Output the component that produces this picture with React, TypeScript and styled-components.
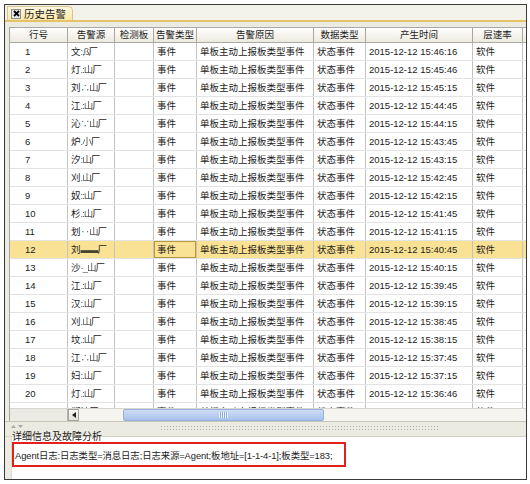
import styled, { createGlobalStyle } from 'styled-components'

interface AlarmRow {
  no: number
  src: [string, string]
  time: string
}

const columns = [58, 47, 39, 43, 117, 52, 107, 50]
const gridCols = columns.map(w => `${w}px`).join(' ')
const headers = ['行号', '告警源', '检测板', '告警类型', '告警原因', '数据类型', '产生时间', '层速率']

const times = [
  '15:46:16', '15:45:46', '15:45:15', '15:44:45', '15:44:15', '15:43:45', '15:43:15',
  '15:42:45', '15:42:15', '15:41:45', '15:41:15', '15:40:45', '15:40:15', '15:39:45',
  '15:39:15', '15:38:45', '15:38:15', '15:37:45', '15:37:15', '15:36:46', '15:36:15',
]
const sources: [string, string][] = [
  ['文', ':,ß'], ['灯', '.:山'], ['刘', '∴山'], ['江', '.:山'], ['沁', '∵山'], ['炉', '.小'],
  ['汐', ':山'], ['刈', '.山'], ['奴', '::山'], ['杉', '.:山'], ['划', '‥山'], ['刘', '▬▬'],
  ['沙', '·_山'], ['江', '.:山'], ['汉', ':.山'], ['刈', '.山'], ['坟', '.:山'], ['江', '∴山'],
  ['妇', ':.山'], ['灯', '.:山'], ['掷', '浣'],
]

const rows: AlarmRow[] = times.map((t, i) => ({ no: i + 1, src: sources[i], time: t }))

const GlobalStyle = createGlobalStyle`
  *, *::before, *::after { box-sizing: border-box; }
  body {
    margin: 0;
    background: #fff;
    font-family: "Liberation Sans", "Noto Sans CJK SC", sans-serif;
    color: #1c1c1c;
  }
`

const Frame = styled.div`
  margin: 4px;
  width: 523px;
  height: 476px;
  border: 1px solid #3a3a3a;
  display: flex;
  flex-direction: column;
  background: #ecebe2;
`

const TabBar = styled.div`
  height: 17px;
  flex: none;
  display: flex;
  align-items: flex-end;
  padding-left: 2px;
  background: #f3f2eb;
  border-bottom: 2px solid #e4c269;
`

const Tab = styled.div`
  width: 66px;
  height: 14px;
  display: flex;
  align-items: center;
  gap: 3px;
  padding-left: 3px;
  background: linear-gradient(#fef8df, #fbe8a6);
  border: 1px solid #d6c391;
  border-bottom: none;
  border-top-right-radius: 5px;
  font-size: 10.5px;
  line-height: 12px;
`

const CloseBox = styled.span`
  width: 10px;
  height: 10px;
  display: grid;
  place-items: center;
  border: 1px solid #8c8c8c;
  background: #e6e6e6;
`

const Content = styled.div`
  flex: none;
  padding: 5px 0 0 4px;
`

const Grid = styled.div`
  background: #fff;
  border-left: 1px solid #a5a5a5;
`

const HeaderRow = styled.div`
  display: grid;
  grid-template-columns: ${gridCols};
  height: 16px;
  border-top: 1px solid #a9a9a9;
  border-bottom: 1px solid #a9a9a9;
  background: linear-gradient(#fefefd, #eceadf);
`

const HeadCell = styled.div`
  border-right: 1px solid #aca899;
  text-align: center;
  font-size: 9.5px;
  line-height: 14px;
  white-space: nowrap;
  overflow: hidden;
`

const Body = styled.div`
  height: 365px;
  overflow: hidden;
`

const Row = styled.div<{ $active?: boolean }>`
  display: grid;
  grid-template-columns: ${gridCols};
  height: 18px;
  border-bottom: 1px solid #e3e3e3;
  background: ${p => (p.$active ? '#fae294' : '#fff')};
`

const Cell = styled.div<{ $focus?: boolean; $indent?: number }>`
  border-right: 1px solid #c3c3c3;
  padding-left: ${p => p.$indent ?? 3}px;
  font-size: 9.5px;
  line-height: 17px;
  white-space: nowrap;
  overflow: hidden;
  box-shadow: ${p => (p.$focus ? 'inset 0 0 0 1px #b8983f' : 'none')};
`

const Smudge = styled.span`
  filter: blur(0.5px);
  opacity: 0.8;
  letter-spacing: -1px;
`

const HScroll = styled.div`
  height: 13px;
  display: flex;
  border-top: 1px solid #d8d7cf;
`

const Frozen = styled.div`
  width: 58px;
  background: #ebeae3;
  border-right: 1px solid #b4b3aa;
`

const ArrowBtn = styled.div`
  width: 11px;
  display: grid;
  place-items: center;
  background: linear-gradient(#fbfbf8, #e3e2da);
  border: 1px solid #a6a59b;
`

const Track = styled.div`
  flex: 1;
  padding-left: 44px;
  background: #f5f4ef;
`

const Thumb = styled.div`
  width: 201px;
  height: 100%;
  display: grid;
  place-items: center;
  background: linear-gradient(#cfdcf4, #a9c2ec);
  border: 1px solid #93b0de;
  border-radius: 2px;
`

const Grip = styled.div`
  width: 9px;
  height: 6px;
  background: repeating-linear-gradient(90deg, #eef4fd 0 1px, #8ea9d6 1px 2px);
`

const Splitter = styled.div`
  height: 16px;
  flex: none;
  display: flex;
  align-items: flex-start;
  padding: 2px 0 0 5px;
  background: #ecebe1;
  border-top: 1px solid #c8c6ba;
  border-bottom: 1px solid #d9d7cb;
`

const Dots = styled.div`
  margin: 1px 0 0 136px;
  width: 280px;
  height: 6px;
  background-image: radial-gradient(circle, #b3b0a3 0.7px, transparent 0.9px);
  background-size: 3px 3px;
`

const Group = styled.div`
  flex: 1;
  margin-left: 6px;
  background: #fff;
  border-left: 1px solid #dcdad0;
`

const GroupTitle = styled.div`
  display: flex;
  align-items: center;
  height: 11px;
  margin-top: -6px;
`

const GroupLabel = styled.span`
  font-size: 10px;
  line-height: 11px;
  padding-right: 3px;
  color: #222;
`

const GroupLine = styled.div`
  flex: 1;
  height: 1px;
  background: #d2d0c4;
`

const Detail = styled.div`
  width: 334px;
  height: 25px;
  display: flex;
  align-items: center;
  padding-left: 1px;
  border: 2px solid #e3201b;
  font-size: 9.4px;
  letter-spacing: -0.1px;
  white-space: nowrap;
  overflow: hidden;
`

function App() {
  return (
    <>
      <GlobalStyle />
      <Frame>
        <TabBar>
          <Tab>
            <CloseBox>
              <svg width="7" height="7" viewBox="0 0 7 7">
                <path d="M1 1L6 6M6 1L1 6" stroke="#000" strokeWidth="1.8" />
              </svg>
            </CloseBox>
            历史告警
          </Tab>
        </TabBar>
        <Content>
          <Grid>
            <HeaderRow>
              {headers.map(h => (
                <HeadCell key={h}>{h}</HeadCell>
              ))}
            </HeaderRow>
            <Body>
              {rows.map(r => {
                const active = r.no === 12
                return (
                  <Row key={r.no} $active={active}>
                    <Cell $indent={15}>{r.no}</Cell>
                    <Cell>
                      {r.src[0]}
                      <Smudge>{r.src[1]}</Smudge>厂
                    </Cell>
                    <Cell />
                    <Cell $focus={active}>事件</Cell>
                    <Cell>单板主动上报板类型事件</Cell>
                    <Cell>状态事件</Cell>
                    <Cell>2015-12-12 {r.time}</Cell>
                    <Cell>软件</Cell>
                  </Row>
                )
              })}
            </Body>
            <HScroll>
              <Frozen />
              <ArrowBtn>
                <svg width="4" height="6" viewBox="0 0 4 6">
                  <path d="M4 0L0 3L4 6Z" fill="#222" />
                </svg>
              </ArrowBtn>
              <Track>
                <Thumb>
                  <Grip />
                </Thumb>
              </Track>
            </HScroll>
          </Grid>
        </Content>
        <Splitter>
          <svg width="14" height="8" viewBox="0 0 14 8">
            <path d="M1 4L3.5 1L6 4Z" fill="#a9a9a0" />
            <path d="M8 1L13 1L10.5 4Z" fill="#a9a9a0" />
          </svg>
          <Dots />
        </Splitter>
        <Group>
          <GroupTitle>
            <GroupLabel>详细信息及故障分析</GroupLabel>
            <GroupLine />
          </GroupTitle>
          <Detail>Agent日志:日志类型=消息日志;日志来源=Agent;板地址=[1-1-4-1];板类型=183;</Detail>
        </Group>
      </Frame>
    </>
  )
}

export default App
